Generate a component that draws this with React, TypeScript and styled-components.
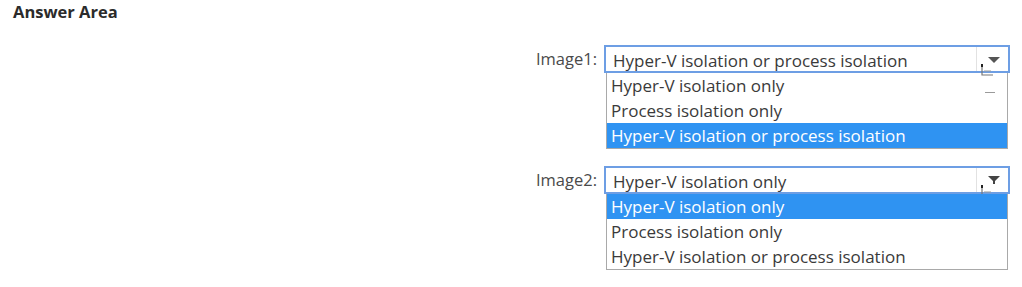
import React from "react";
import styled, { createGlobalStyle } from "styled-components";

const GlobalStyle = createGlobalStyle`
  body {
    margin: 0;
    background: #ffffff;
    font-family: "Open Sans", "Noto Sans", sans-serif;
    color: #3a3a3a;
  }
`;

const Page = styled.div`
  width: 1022px;
  height: 287px;
  padding: 1px 13px 0;
  box-sizing: border-box;
`;

const Title = styled.div`
  font-size: 16.5px;
  font-weight: 700;
  color: #2b2b2b;
  line-height: 22px;
`;

const Form = styled.div`
  display: flex;
  flex-direction: column;
  gap: 17px;
  margin-left: 507px;
  margin-top: 22px;
`;

const Row = styled.div`
  display: grid;
  grid-template-columns: 77px 406px;
  column-gap: 7px;
  align-items: start;
`;

const Label = styled.div`
  font-size: 16.5px;
  line-height: 28px;
  text-align: right;
  color: #4a4a4a;
  white-space: nowrap;
`;

const Dropdown = styled.div`
  display: flex;
  flex-direction: column;
`;

const Select = styled.div`
  height: 28px;
  box-sizing: border-box;
  border: 2px solid #6d9ee4;
  display: flex;
  align-items: center;
`;

const Value = styled.div`
  flex: 1;
  padding-left: 7px;
  padding-top: 3px;
  font-size: 17px;
  line-height: 24px;
  color: #3a3a3a;
  white-space: nowrap;
`;

const ArrowBox = styled.div`
  width: 31px;
  align-self: stretch;
  border-left: 1px solid #e2e2e2;
  display: flex;
  align-items: center;
  justify-content: center;
  position: relative;
`;

const List = styled.div`
  margin: 0 2px 0 2px;
  border: 1px solid #a9a9a9;
  border-top: none;
  display: flex;
  flex-direction: column;
  position: relative;
`;

const Item = styled.div<{ $active?: boolean }>`
  height: 25px;
  line-height: 25px;
  padding-left: 4px;
  font-size: 17px;
  white-space: nowrap;
  background: ${(p) => (p.$active ? "#2f93f2" : "transparent")};
  color: ${(p) => (p.$active ? "#ffffff" : "#3a3a3a")};
`;

const Dash = styled.div`
  position: absolute;
  right: 12px;
  top: 19px;
  width: 10px;
  height: 1px;
  background: #9a9a9a;
`;

const Cursor = styled.svg`
  position: absolute;
  left: 2px;
  bottom: -6px;
`;

const options = [
  "Hyper-V isolation only",
  "Process isolation only",
  "Hyper-V isolation or process isolation",
];

const Arrow = ({ funnel }: { funnel?: boolean }) => (
  <ArrowBox>
    <svg width="14" height="10" viewBox="0 0 14 10" style={{ marginTop: funnel ? 0 : 2, marginLeft: 3 }}>
      {funnel ? (
        <path d="M1 1 H13 L8 6 V9 H6 V6 Z" fill="#444" />
      ) : (
        <path d="M1 2 H13 L7 8 Z" fill="#555" />
      )}
    </svg>
    <Cursor width="16" height="14" viewBox="0 0 16 14">
      <rect x="2" y="1" width="2" height="3" fill="#222" />
      <path d="M3 4 V12 H14" stroke="#777" strokeWidth="1.2" fill="none" />
      <path d="M5 8 H12" stroke="#999" strokeWidth="1" />
    </Cursor>
  </ArrowBox>
);

const Question = ({
  label,
  value,
  active,
  funnel,
  dash,
}: {
  label: string;
  value: string;
  active: number;
  funnel?: boolean;
  dash?: boolean;
}) => (
  <Row>
    <Label>{label}</Label>
    <Dropdown>
      <Select>
        <Value>{value}</Value>
        <Arrow funnel={funnel} />
      </Select>
      <List>
        {options.map((o, i) => (
          <Item key={o} $active={i === active}>
            {o}
          </Item>
        ))}
        {dash && <Dash />}
      </List>
    </Dropdown>
  </Row>
);

export default function App() {
  return (
    <>
      <GlobalStyle />
      <Page>
        <Title>Answer Area</Title>
        <Form>
          <Question label="Image1:" value={options[2]} active={2} dash />
          <Question label="Image2:" value={options[0]} active={0} funnel />
        </Form>
      </Page>
    </>
  );
}
